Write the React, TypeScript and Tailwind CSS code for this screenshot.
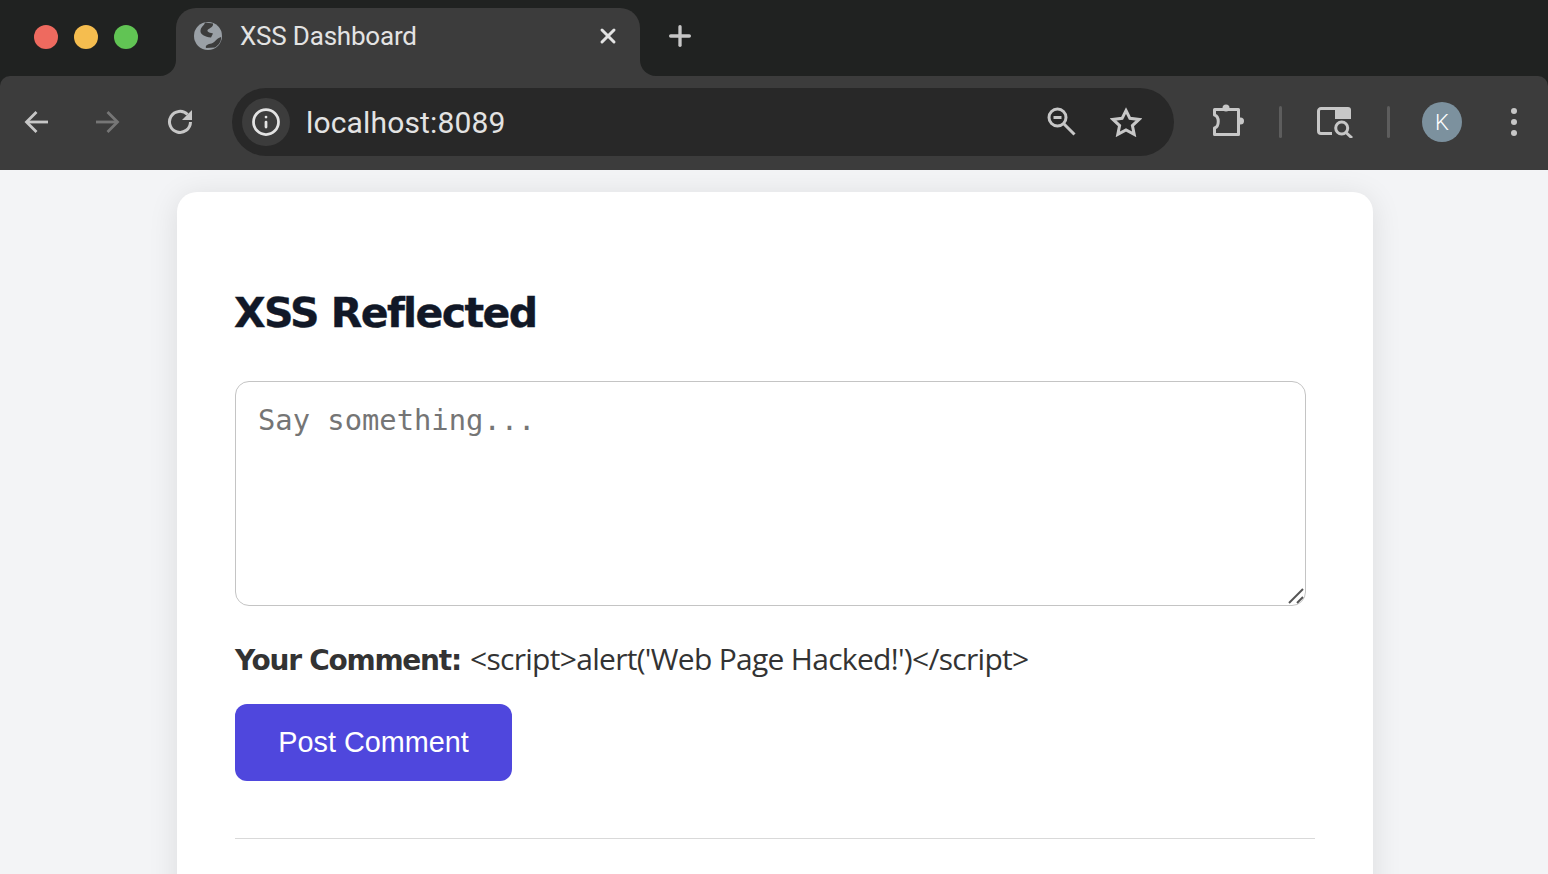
import { Info, Plus, X } from "lucide-react";

const Globe = () => (
  <svg width="28" height="28" viewBox="0 0 28 28">
    <circle cx="14" cy="14" r="14" fill="#9aa0a6" />
    <path d="M11 0.5L19 1.5C19.5 5 16 6 14 7.5C12.5 9 14 10.5 19 11.5L17 15.5C11 15 6 12.5 6.5 8.5C7 4.5 10 4 11 0.5z" fill="#3c3c3c" />
    <path d="M27 15C27.5 19 25 23 21 25.5L12 26C11 23.5 14 22 17.5 21.5C21 20.5 22 16.5 27 15z" fill="#3c3c3c" />
  </svg>
);

const BackIcon = ({ color }: { color: string }) => (
  <svg width="24" height="24" viewBox="0 0 24 24" fill="none" stroke={color} strokeWidth="2.8">
    <path d="M24 12H3" />
    <path d="M12.5 2L2.5 12L12.5 22" />
  </svg>
);

const ReloadIcon = () => (
  <svg width="26" height="26" viewBox="0 0 26 26" fill="none" stroke="#c7c7c7" strokeWidth="3">
    <path d="M20.5 5.5A10.5 10.5 0 1 0 23.5 13" />
    <path d="M25 1V11H15z" fill="#c7c7c7" stroke="none" />
  </svg>
);

const ZoomOutIcon = () => (
  <svg width="30" height="30" viewBox="0 0 30 30" fill="none" stroke="#c7c7c7" strokeWidth="3">
    <circle cx="10.5" cy="10.5" r="8.5" />
    <path d="M6.5 10.5h8" />
    <path d="M17 17L27.5 27.5" />
  </svg>
);

const StarIcon = () => (
  <svg width="32" height="30" viewBox="0 0 32 30" fill="none" stroke="#c7c7c7" strokeWidth="3" strokeLinejoin="miter">
    <path d="M16 3.5L19.9 11.3L29 12.4L22.4 18.6L24.2 27.4L16 23L7.8 27.4L9.6 18.6L3 12.4L12.1 11.3z" />
  </svg>
);

const PuzzleIcon = () => (
  <svg width="34" height="38" viewBox="0 0 34 38" fill="none" stroke="#c7c7c7" strokeWidth="3" strokeLinejoin="round">
    <path d="M3.5 6.5H27.5V31.5H3.5V25C8.5 23.5 8.5 13.5 3.5 12z" />
    <circle cx="15" cy="5" r="3.5" fill="#c7c7c7" stroke="none" />
    <circle cx="29.5" cy="18" r="3.5" fill="#c7c7c7" stroke="none" />
  </svg>
);

const SidePanelSearch = () => (
  <svg width="37" height="32" viewBox="0 0 37 32" fill="none" stroke="#c7c7c7" strokeWidth="3">
    <path d="M15 27.5H4a2.5 2.5 0 0 1-2.5-2.5V5A2.5 2.5 0 0 1 4 2.5H20" />
    <path d="M18 1H31a3 3 0 0 1 3 3V13H18z" fill="#c7c7c7" stroke="none" />
    <circle cx="24.7" cy="22" r="6" />
    <path d="M29 26.5L35 32" />
  </svg>
);

const Resizer = () => (
  <svg className="absolute right-0 bottom-0" width="18" height="18" viewBox="0 0 18 18" stroke="#555" strokeWidth="2" fill="none">
    <path d="M1 15L15 1" />
    <path d="M9 15l6-6" />
  </svg>
);

export default function App() {
  return (
    <div className="h-[874px] overflow-hidden bg-[#f3f4f6]">
      <div className="bg-[#202221]">
        <div className="flex h-[76px] bg-[#3c3c3c]">
          <div className="flex w-[176px] items-center gap-4 rounded-br-[16px] bg-[#202221] pb-[2px] pl-[34px]">
            <span className="h-6 w-6 rounded-full bg-[#ee6a5f]" />
            <span className="h-6 w-6 rounded-full bg-[#f5bd4f]" />
            <span className="h-6 w-6 rounded-full bg-[#61c454]" />
          </div>
          <div className="w-[464px] bg-[#202221] pt-2">
            <div className="flex h-[68px] items-center rounded-t-[20px] bg-[#3c3c3c] pb-[13px] pl-[18px] pr-[20px]">
              <Globe />
              <span className="ml-[18px] mt-[2px] flex-1 font-['Roboto',sans-serif] text-[26px] tracking-[-0.2px] text-[#e3e3e3]">XSS Dashboard</span>
              <X size={24} strokeWidth={3} className="text-[#e3e3e3]" />
            </div>
          </div>
          <div className="flex flex-1 items-center rounded-bl-[16px] bg-[#202221] pb-[4px] pl-[24px]">
            <Plus size={32} strokeWidth={2.5} className="text-[#c7c7c7]" />
          </div>
        </div>
        <div className="flex h-[94px] items-center rounded-t-[10px] bg-[#3c3c3c] pb-[2px] pl-[24px]">
          <BackIcon color="#c7c7c7" />
          <div className="ml-[48px] rotate-180"><BackIcon color="#767676" /></div>
          <div className="ml-[47px]"><ReloadIcon /></div>
          <div className="ml-[39px] flex h-[68px] w-[942px] items-center rounded-full bg-[#282828] pl-[10px] pr-[32px]">
            <div className="flex h-12 w-12 items-center justify-center rounded-full bg-[#3c3c3c]">
              <Info size={30} strokeWidth={2.2} className="text-[#e3e3e3]" />
            </div>
            <span className="ml-4 flex-1 font-['Roboto',sans-serif] text-[30px] tracking-[0.15px] text-[#e3e3e3]">localhost:8089</span>
            <ZoomOutIcon />
            <div className="ml-[33px]"><StarIcon /></div>
          </div>
          <div className="ml-[37px]"><PuzzleIcon /></div>
          <span className="ml-[34px] h-8 w-[3px] rounded bg-[#5d5d5d]" />
          <div className="ml-[35px]"><SidePanelSearch /></div>
          <span className="ml-[33px] h-8 w-[3px] rounded bg-[#5d5d5d]" />
          <div className="ml-[32px] flex h-10 w-10 items-center justify-center rounded-full bg-[#7c919e] font-['Roboto',sans-serif] text-[22px] font-light text-white">K</div>
          <div className="ml-[49px] flex flex-col gap-[5px]">
            <span className="h-[6px] w-[6px] rounded-full bg-[#c7c7c7]" />
            <span className="h-[6px] w-[6px] rounded-full bg-[#c7c7c7]" />
            <span className="h-[6px] w-[6px] rounded-full bg-[#c7c7c7]" />
          </div>
        </div>
      </div>

      <div className="ml-[177px] mt-[22px] h-[800px] w-[1196px] rounded-[20px] bg-white pl-[58px] pt-[93px] shadow-[0_4px_30px_rgba(0,0,0,0.1)]">
        <h1 className="-ml-[1px] font-['DejaVu_Sans',sans-serif] text-[41px] leading-[56px] font-bold tracking-[-1.6px] text-[#111827] [-webkit-text-stroke:0.4px_#111827]">XSS Reflected</h1>
        <div className="relative mt-[40px] h-[225px] w-[1071px]">
          <textarea
            placeholder="Say something..."
            className="h-full w-full resize-none rounded-[14px] border border-[#c4c4c4] px-[22px] py-[20px] font-['DejaVu_Sans_Mono',monospace] text-[28.8px] leading-[36px] placeholder:text-[#757575]"
          />
          <Resizer />
        </div>
        <p className="mt-[33px] font-['Open_Sans',sans-serif] text-[30px] leading-10 tracking-[-0.7px] text-[#333333]">
          <strong className="font-['DejaVu_Sans',sans-serif] text-[28px] tracking-[-1.25px]">Your Comment:</strong>{" "}
          <span className="ml-[2px]">{"<script>alert('Web Page Hacked!')</script>"}</span>
        </p>
        <button className="mt-[23px] block h-[77px] w-[277px] rounded-[12px] bg-[#4f47dd] font-['Liberation_Sans',sans-serif] text-[28.8px] text-white">Post Comment</button>
        <div className="mt-[57px] h-[1px] w-[1080px] bg-[#d9d9d9]" />
      </div>
    </div>
  );
}
